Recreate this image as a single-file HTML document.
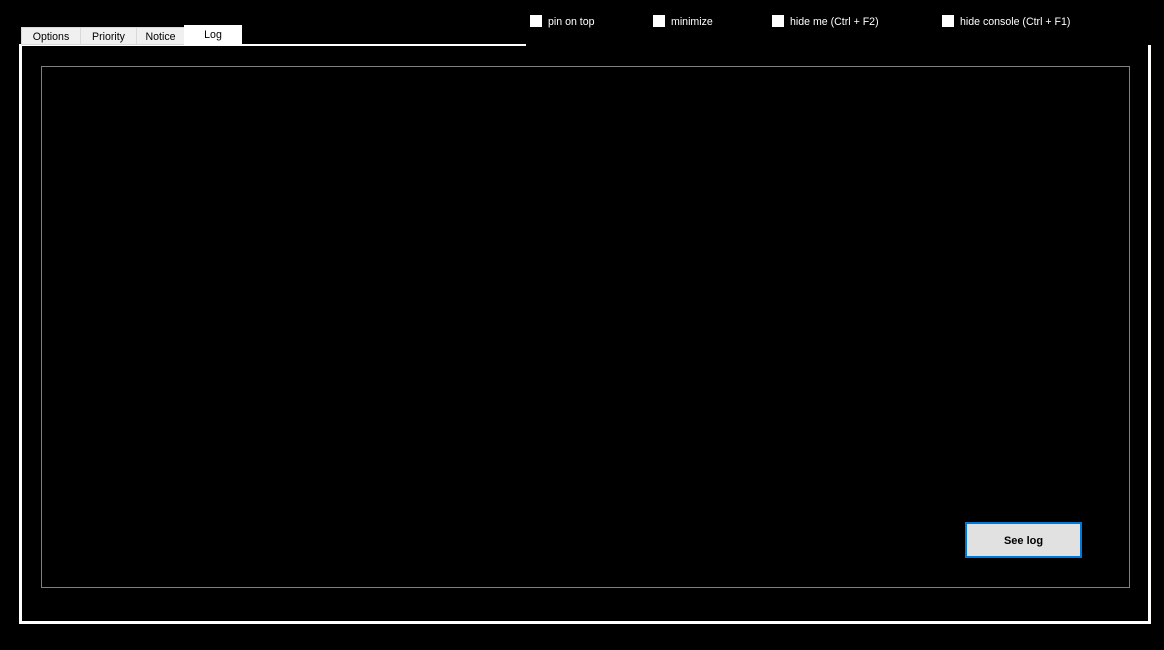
<!DOCTYPE html>
<html><head><style>
body{margin:0;width:1164px;height:650px;background:#000;position:relative;overflow:hidden;font-family:"Liberation Sans",Arial,sans-serif;font-size:11px}
.a{position:absolute}
.tab{position:absolute;top:27px;height:18px;background:#f0f0f0;border:1px solid #d9d9d9;box-sizing:border-box;color:#000;text-align:center;line-height:19px;font-size:10.6px}
.cb{position:absolute;top:15px;width:12px;height:12px;background:#fff}
.lb{position:absolute;top:15px;color:#fff;font-size:10.6px;line-height:14px}
</style></head><body>
<div class="a" style="left:19px;top:45px;width:1132px;height:579px;border-left:3px solid #fff;border-right:3px solid #fff;border-bottom:3px solid #fff;box-sizing:border-box"></div>
<div class="a" style="left:19px;top:44px;width:507px;height:2px;background:#fff"></div>
<div class="a" style="left:41px;top:66px;width:1089px;height:522px;border:1px solid #808080;box-sizing:border-box"></div>
<div class="tab" style="left:21px;width:60px">Options</div>
<div class="tab" style="left:80px;width:57px">Priority</div>
<div class="tab" style="left:136px;width:49px">Notice</div>
<div class="tab" style="left:184px;top:25px;width:58px;height:21px;background:#fff;border-color:#fff;line-height:19px">Log</div>
<div class="cb" style="left:530px"></div><div class="lb" style="left:548px">pin on top</div>
<div class="cb" style="left:653px"></div><div class="lb" style="left:671px">minimize</div>
<div class="cb" style="left:772px"></div><div class="lb" style="left:790px">hide me (Ctrl + F2)</div>
<div class="cb" style="left:942px"></div><div class="lb" style="left:960px">hide console (Ctrl + F1)</div>
<div class="a" style="left:965px;top:522px;width:117px;height:36px;border:2px solid #0078d7;background:#e1e1e1;box-sizing:border-box;text-align:center;line-height:34px;font-weight:bold;font-size:11px;color:#000">See log</div>
</body></html>
